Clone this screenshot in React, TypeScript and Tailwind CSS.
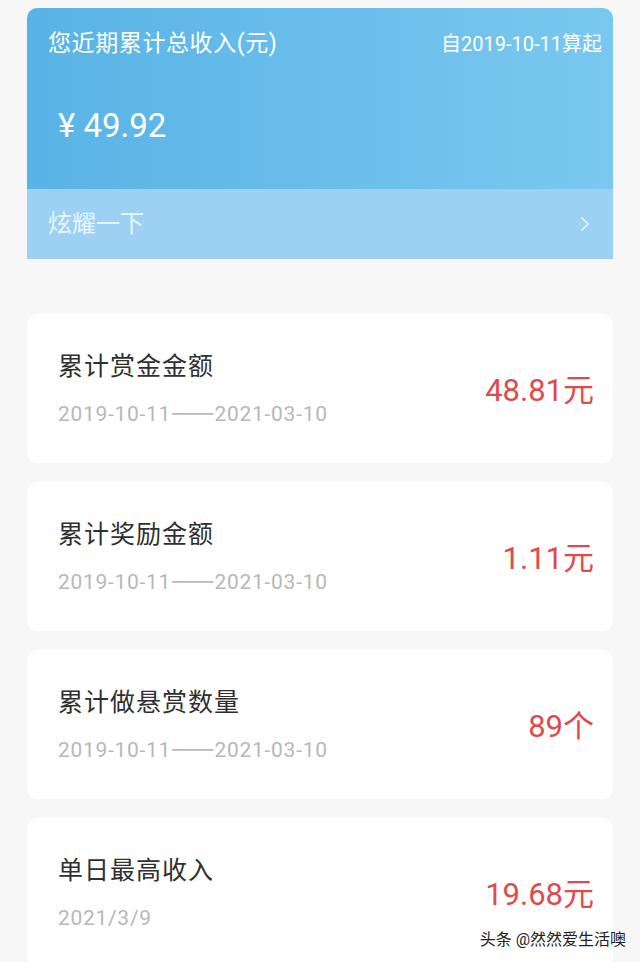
import React from "react";

const font = { fontFamily: '"Roboto", "Noto Sans CJK SC", "Noto Sans", sans-serif' };
const cjk = { fontFamily: '"Noto Sans CJK SC", sans-serif' };

function StatCard({ title, sub, value, unit }: { title: string; sub: React.ReactNode; value: string; unit: string }) {
  return (
    <div className="h-[149px] bg-white rounded-[10px] flex items-center justify-between pl-[31px] pr-[19px]">
      <div className="flex flex-col gap-[19px] mt-[2px]">
        <div className="text-[25px] leading-[30px] tracking-[1px] text-[#2f2f2f]">{title}</div>
        <div className="text-[21px] leading-[26px] text-[#b8b8b8] tracking-[0.7px] whitespace-nowrap">{sub}</div>
      </div>
      <div className="text-[31px] leading-[38px] text-[#df4a4e] mt-[4px]">
        {value}
        <span>{unit}</span>
      </div>
    </div>
  );
}

const Range = (
  <>
    2019-10-11
    <span className="text-[26px] leading-[0] tracking-[0px]" style={cjk}>
      ——
    </span>
    2021-03-10
  </>
);

export default function App() {
  return (
    <div className="relative w-[640px] h-[962px] overflow-hidden bg-[#f7f7f7] pt-[8px] px-[27px]" style={font}>
      <div className="rounded-t-[10px] overflow-hidden">
        <div className="h-[181px] bg-gradient-to-r from-[#58b3e6] to-[#7ac8ef] px-[21px] pt-[21px]">
          <div className="flex justify-between items-center">
            <div className="text-[23px] leading-[30px] tracking-[0.6px] text-white">您近期累计总收入(元)</div>
            <div className="text-[20px] leading-[30px] text-white mr-[-10px]">自2019-10-11算起</div>
          </div>
          <div className="mt-[47px] ml-[10px] text-[33px] leading-[40px] text-white">¥ 49.92</div>
        </div>
        <div className="h-[70px] bg-[#9dd1f3] flex items-center justify-between pl-[21px] pr-[22px]">
          <div className="text-[24px] text-[#eaf6fd]">炫耀一下</div>
          <svg width="12" height="18" viewBox="0 0 12 18" fill="none">
            <path d="M3 3 L9 9 L3 15" stroke="#e6f4fd" strokeWidth="1.6" strokeLinecap="round" strokeLinejoin="round" />
          </svg>
        </div>
      </div>
      <div className="mt-[55px] flex flex-col gap-[19px]">
        <StatCard title="累计赏金金额" sub={Range} value="48.81" unit="元" />
        <StatCard title="累计奖励金额" sub={Range} value="1.11" unit="元" />
        <StatCard title="累计做悬赏数量" sub={Range} value="89" unit="个" />
        <StatCard title="单日最高收入" sub="2021/3/9" value="19.68" unit="元" />
      </div>
      <div
        className="absolute right-[14px] bottom-[12px] text-[16px] leading-[20px] text-[#222]"
        style={{ textShadow: "0 0 2px #fff, 0 0 2px #fff, 0 0 2px #fff" }}
      >
        头条 @然然爱生活噢
      </div>
    </div>
  );
}
